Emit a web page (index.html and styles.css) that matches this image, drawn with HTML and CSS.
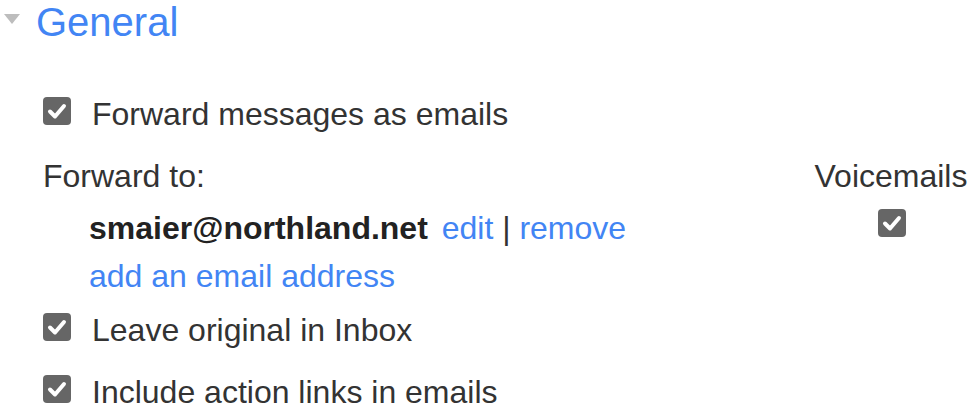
FILE: index.html
```html
<html lang="en">
<head>
    <meta charset="UTF-8">
    <meta name="viewport" content="width=device-width, initial-scale=1.0">
    <title>Settings - General</title>
    <link rel="stylesheet" href="styles.css">
</head>
<body>
    <div class="section">
        <div class="section-head">
            <span class="toggle"></span>
            <h2 class="section-title">General</h2>
        </div>

        <div class="options">
            <div class="option first">
                <span class="check">
                    <svg viewBox="0 0 28 28"><path d="M7 14.5 L12 19.5 L21 9"/></svg>
                </span>
                <span class="label">Forward messages as emails</span>
            </div>

            <div class="fwd-row fwd-head">
                <div class="fwd-main">Forward to:</div>
                <div class="fwd-col">Voicemails</div>
            </div>
            <div class="fwd-row fwd-email">
                <div class="fwd-main indent">
                    <b class="address">smaier@northland.net</b>
                    <span class="actions"><a href="#">edit</a> | <a href="#">remove</a></span>
                </div>
                <div class="fwd-col">
                    <span class="check">
                        <svg viewBox="0 0 28 28"><path d="M7 14.5 L12 19.5 L21 9"/></svg>
                    </span>
                </div>
            </div>
            <div class="fwd-row fwd-add">
                <div class="fwd-main indent"><a href="#">add an email address</a></div>
            </div>

            <div class="option leave">
                <span class="check">
                    <svg viewBox="0 0 28 28"><path d="M7 14.5 L12 19.5 L21 9"/></svg>
                </span>
                <span class="label">Leave original in Inbox</span>
            </div>
            <div class="option include">
                <span class="check">
                    <svg viewBox="0 0 28 28"><path d="M7 14.5 L12 19.5 L21 9"/></svg>
                </span>
                <span class="label">Include action links in emails</span>
            </div>
        </div>
    </div>
</body>
</html>
```

FILE: styles.css
```css
body {
    font-family: 'Liberation Sans', Arial, sans-serif;
    background-color: #fff;
    color: #333;
    margin: 0;
    padding: 0;
}
a {
    color: #4285f4;
    text-decoration: none;
}
.section-head {
    display: flex;
    align-items: center;
    height: 44px;
}
.toggle {
    width: 0;
    height: 0;
    border-left: 8px solid transparent;
    border-right: 8px solid transparent;
    border-top: 10px solid #bdbdbd;
    margin-left: 4px;
    margin-top: -6px;
}
.section-title {
    margin: 0 0 0 16px;
    font-size: 40px;
    font-weight: normal;
    line-height: 44px;
    color: #4285f4;
}
.options {
    padding: 0 8px 0 43px;
    font-size: 32px;
    line-height: 40px;
}
.option {
    display: flex;
    align-items: flex-start;
}
.option.first {
    margin-top: 50px;
}
.option.leave {
    margin-top: 14px;
}
.option.include {
    margin-top: 22px;
}
.check {
    display: inline-block;
    width: 28px;
    height: 28px;
    margin-top: 3px;
    background-color: #666;
    border-radius: 4px;
    flex-shrink: 0;
}
.check svg {
    display: block;
    width: 28px;
    height: 28px;
}
.check path {
    fill: none;
    stroke: #fff;
    stroke-width: 4;
    stroke-linecap: round;
    stroke-linejoin: round;
}
.label {
    margin-left: 21px;
}
.fwd-row {
    display: flex;
}
.fwd-main {
    flex: 1;
}
.fwd-col {
    width: 156px;
    text-align: center;
}
.fwd-head {
    margin-top: 22px;
}
.fwd-email {
    margin-top: 12px;
}
.fwd-email .check {
    margin-top: 1px;
    margin-left: 2px;
}
.fwd-add {
    margin-top: 8px;
}
.indent {
    padding-left: 46px;
}
.address {
    color: #222;
}
.actions {
    margin-left: 5px;
}
```
